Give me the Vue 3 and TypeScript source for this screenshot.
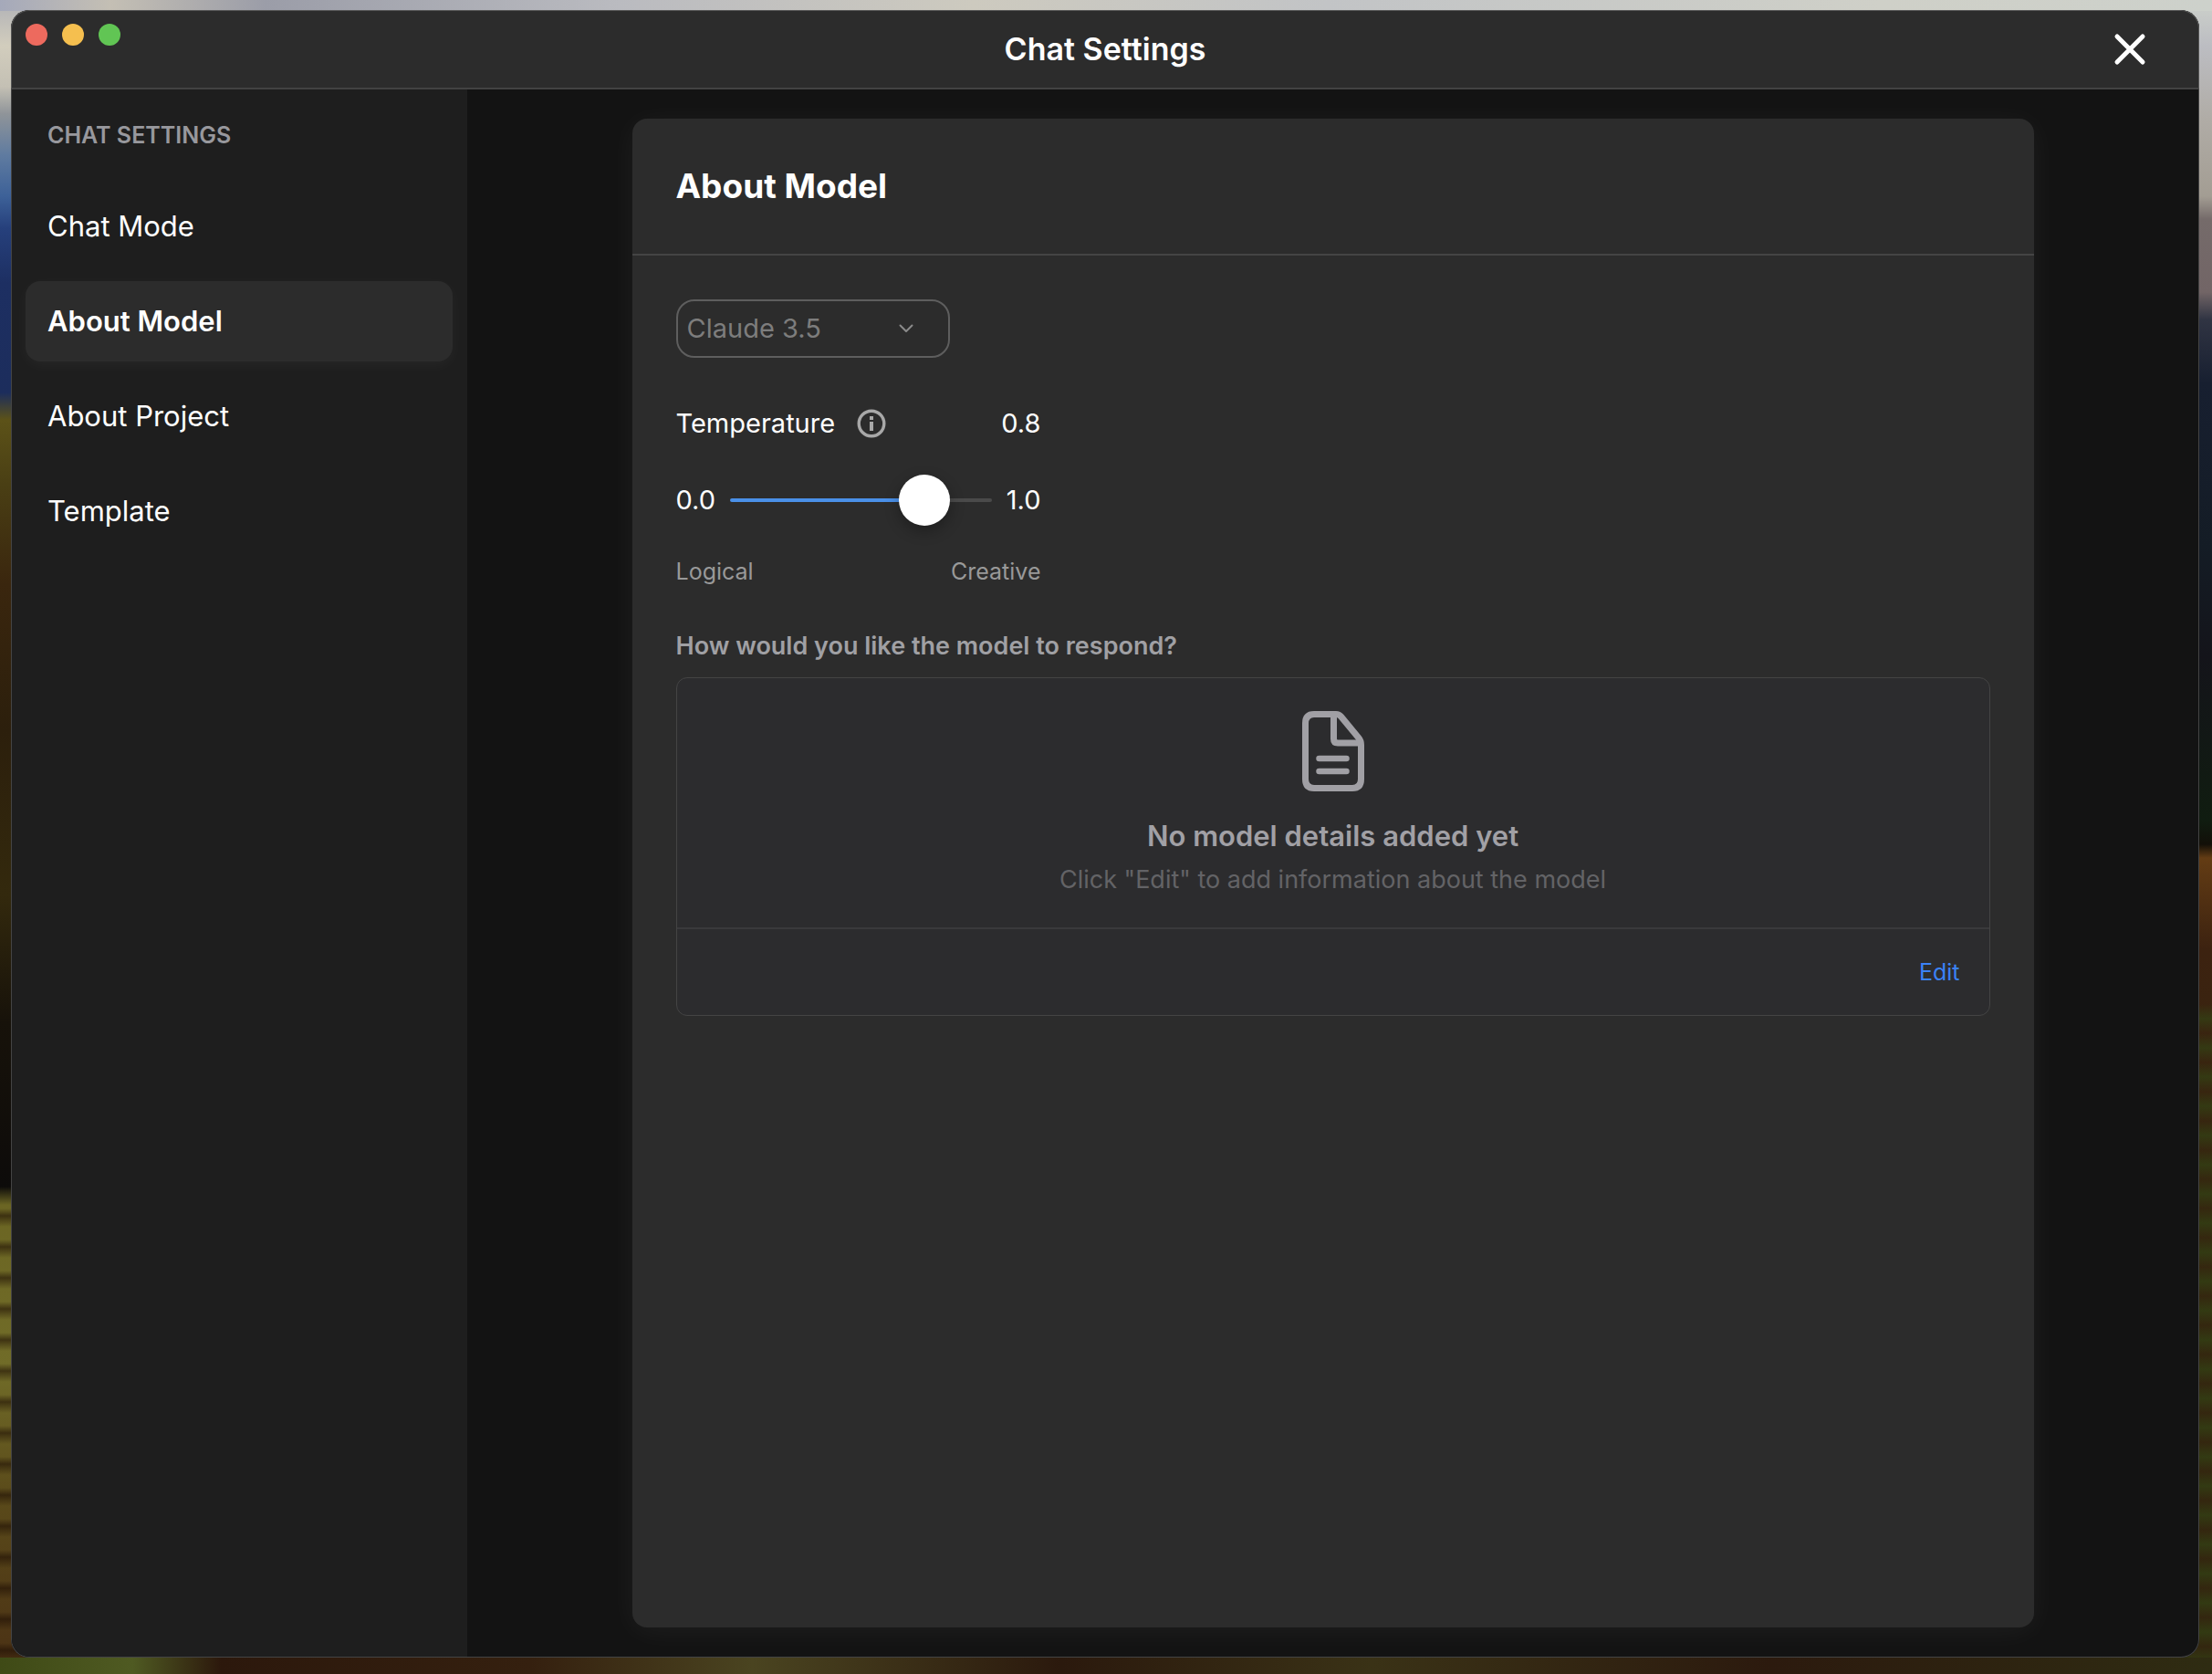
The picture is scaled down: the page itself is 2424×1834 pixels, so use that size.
<script setup lang="ts">
import { computed, ref } from 'vue'

const sections: string[] = ['Chat Mode', 'About Model', 'About Project', 'Template']
const active = ref('About Model')
const model = ref('Claude 3.5')
const temperature = ref(0.8)
const temperatureLabel = computed(() => Number(temperature.value).toFixed(1))
</script>

<template>
  <div class="desktop">
    <div class="window">
      <header class="titlebar">
        <div class="lights">
          <button class="light red" aria-label="Close window"></button>
          <button class="light yellow" aria-label="Minimize window"></button>
          <button class="light green" aria-label="Zoom window"></button>
        </div>
        <h1 class="title">Chat Settings</h1>
        <button class="close" aria-label="Close settings">
          <svg width="36" height="36" viewBox="0 0 36 36" aria-hidden="true">
            <path d="M4 4 32 32M32 4 4 32" fill="none" stroke="#fff" stroke-width="5" stroke-linecap="round" />
          </svg>
        </button>
      </header>

      <div class="layout">
        <nav class="sidebar" aria-label="Chat settings">
          <h2 class="sidebar-heading">CHAT SETTINGS</h2>
          <div class="sidebar-list">
            <button
              v-for="name in sections"
              :key="name"
              class="nav-item"
              :class="{ active: name === active }"
              @click="active = name"
            >{{ name }}</button>
          </div>
        </nav>

        <main class="content">
          <section class="card">
            <div class="card-header">
              <h2 class="card-title">About Model</h2>
            </div>
            <div class="card-body">
              <div class="select-wrap">
                <select v-model="model" class="select" aria-label="Model">
                  <option>Claude 3.5</option>
                </select>
                <svg class="chevron" width="16" height="10" viewBox="0 0 16 10" aria-hidden="true">
                  <path d="M1.500 1.500 8 8 14.500 1.500" fill="none" stroke="#8a8a8a" stroke-width="2" stroke-linecap="round" stroke-linejoin="round" />
                </svg>
              </div>

              <div class="temperature">
                <div class="temp-row">
                  <label for="temperature">Temperature</label>
                  <svg class="info" width="32" height="32" viewBox="0 0 32 32" aria-hidden="true">
                    <circle cx="16" cy="16" r="13.800" fill="none" stroke="#a8a8a8" stroke-width="3.400" />
                    <path d="M14 8h4v4h-4zM14 14h4v10h-4z" fill="#a8a8a8" />
                  </svg>
                  <output class="temp-value" for="temperature">{{ temperatureLabel }}</output>
                </div>
                <div class="slider-row">
                  <span>0.0</span>
                  <input
                    id="temperature"
                    v-model="temperature"
                    class="slider"
                    type="range"
                    min="0"
                    max="1"
                    step="0.1"
                    :style="{ '--fill': Number(temperature) * 100 + '%' }"
                  />
                  <span>1.0</span>
                </div>
                <div class="scale-row">
                  <span>Logical</span>
                  <span>Creative</span>
                </div>
              </div>

              <h3 class="question">How would you like the model to respond?</h3>
              <div class="details">
                <div class="empty">
                  <svg width="68" height="88" viewBox="0 0 68 88" fill="none" stroke="#a1a0a5" stroke-width="7" stroke-linecap="round" stroke-linejoin="round" aria-hidden="true">
                    <path d="M13 3.500H37Q40.500 3.500 42.500 6L61.500 29Q64.500 32.500 64.500 37V74.500Q64.500 84.500 55 84.500H13Q3.500 84.500 3.500 74.500V13.500Q3.500 3.500 13 3.500Z" />
                    <path d="M34.500 5V30.500Q34.500 35 39 35H63" />
                    <path d="M18.500 52H48.500M18.500 66H48.500" stroke-width="6.500" />
                  </svg>
                  <p class="empty-title">No model details added yet</p>
                  <p class="empty-hint">Click "Edit" to add information about the model</p>
                </div>
                <div class="details-footer">
                  <button class="edit">Edit</button>
                </div>
              </div>
            </div>
          </section>
        </main>
      </div>
    </div>
  </div>
</template>

<style>
body {
  margin: 0;
  background: #141414;
}
</style>

<style scoped>
.desktop {
  box-sizing: border-box;
  min-height: 100vh;
  display: flex;
  padding: 11px 14px 18px 12px;
  font-family: Inter, "Liberation Sans", sans-serif;
  color: #fff;
  /* sky on top, hills and vineyard rows down both sides and along the bottom */
  background:
    linear-gradient(90deg, #a5a9ba 0, #c4bfb4 5%, #9b9da8 12%, #babbc0 28%, #cdcabf 44%, #c2c4c6 60%, #cfd0c8 85%, #cdd1cb 100%) 0 0 / 100% 12px no-repeat,
    linear-gradient(90deg, #3f4a16 0, #4f5a22 6%, #2c180c 10%, #35200f 24%, #4a4420 34%, #2b190d 48%, #3a3216 62%, #2c1a0e 80%, #2f2c12 100%) 0 100% / 100% 18px no-repeat,
    repeating-linear-gradient(180deg, rgba(30, 14, 4, 0) 0, rgba(30, 14, 4, 0) 14px, rgba(30, 14, 4, 0.600) 22px, rgba(30, 14, 4, 0) 34px) 0 1310px / 40px 520px no-repeat,
    repeating-linear-gradient(180deg, rgba(50, 66, 20, 0) 0, rgba(50, 66, 20, 0.700) 16px, rgba(50, 66, 20, 0) 32px) 100% 1100px / 40px 730px no-repeat,
    linear-gradient(180deg, #b0b1b6 0, #d2cdbd 50px, #c4c0b4 95px, #8f9499 125px, #5f7ba0 170px, #3d6198 215px, #26407c 250px, #1d2f62 310px, #1c2d5c 430px, #5c5218 460px, #4a3f14 530px, #3a260e 640px, #2c1f0c 800px, #33290d 980px, #17120a 1120px, #0d0b0a 1300px, #6b6523 1320px, #716c28 1500px, #5a4a1a 1640px, #4a3014 100%) 0 0 / 40px 100% no-repeat,
    linear-gradient(180deg, #cdd1cb 0, #bcbdc2 50px, #b0aca6 130px, #a39d93 215px, #756b6a 240px, #726566 320px, #303443 350px, #171f30 420px, #141c25 600px, #14141a 720px, #101c10 900px, #120f08 925px, #633c14 940px, #3c2210 1040px, #35270f 1300px, #33260f 100%) 100% 0 / 40px 100% no-repeat;
}

.window {
  flex: 1;
  display: flex;
  flex-direction: column;
  box-sizing: border-box;
  overflow: hidden;
  border-radius: 20px;
  background: #131313;
  box-shadow: inset 0 0 0 1px #444;
}

button {
  border: 0;
  padding: 0;
  margin: 0;
  background: none;
  color: inherit;
  font: inherit;
  cursor: pointer;
}

h1,
h2,
h3,
p {
  margin: 0;
}

.titlebar {
  display: grid;
  grid-template-columns: 1fr auto 1fr;
  box-sizing: border-box;
  height: 87px;
  border: 1px solid #565656;
  border-bottom: 2px solid #424242;
  border-radius: 20px 20px 0 0;
  background: #2c2c2c;
}

.lights {
  display: flex;
  gap: 16px;
  padding: 14px 0 0 15px;
}

.light {
  width: 24px;
  height: 24px;
  border-radius: 50%;
}

.red {
  background: #ed6a5e;
}

.yellow {
  background: #f5bf4f;
}

.green {
  background: #61c554;
}

.title {
  align-self: center;
  font-size: 34px;
  line-height: 40px;
  font-weight: 600;
}

.close {
  justify-self: end;
  align-self: center;
  display: flex;
  margin-right: 57px;
}

.layout {
  flex: 1;
  display: flex;
  margin: 0 1px 1px;
}

.sidebar {
  flex: none;
  box-sizing: border-box;
  width: 499px;
  padding: 36px 16px 32px 15px;
  border-bottom-left-radius: 20px;
  background: #1e1e1e;
}

.sidebar-heading {
  margin-bottom: 42px;
  padding: 0 24px;
  color: #98989d;
  font-size: 25px;
  line-height: 28px;
  font-weight: 600;
}

.sidebar-list {
  display: flex;
  flex-direction: column;
  gap: 16px;
}

.nav-item {
  height: 88px;
  padding: 0 24px;
  border-radius: 16px;
  text-align: left;
  font-size: 31px;
  line-height: 40px;
}

.nav-item.active {
  background: #2c2c2c;
  box-shadow: 0 4px 16px rgba(255, 255, 255, 0.040);
  font-weight: 600;
}

.content {
  flex: 1;
  display: flex;
  justify-content: center;
  padding: 32px;
}

.card {
  flex: 1;
  max-width: 1536px;
  border-radius: 16px;
  background: #2c2c2c;
  box-shadow: 0 4px 32px rgba(255, 255, 255, 0.050);
}

.card-header {
  padding: 48px;
  border-bottom: 2px solid #444;
}

.card-title {
  font-size: 37px;
  line-height: 52px;
  font-weight: 700;
}

.card-body {
  padding: 48px;
}

.select-wrap {
  display: grid;
  align-items: center;
  width: 300px;
  margin-bottom: 56px;
}

.select {
  grid-area: 1 / 1;
  appearance: none;
  box-sizing: border-box;
  width: 100%;
  height: 64px;
  margin: 0;
  padding: 0 48px 0 10px;
  border: 2px solid #5e5e5e;
  border-radius: 20px;
  background: transparent;
  color: #7d7d7d;
  font-family: inherit;
  font-size: 29px;
  line-height: 40px;
}

.chevron {
  grid-area: 1 / 1;
  justify-self: end;
  margin-right: 40px;
  pointer-events: none;
}

.temperature {
  width: 400px;
  margin-bottom: 52px;
  font-size: 29px;
  line-height: 32px;
}

.temp-row {
  display: flex;
  align-items: center;
  gap: 24px;
  margin-bottom: 40px;
}

.temp-value {
  margin-left: auto;
}

.slider-row {
  display: flex;
  align-items: center;
  gap: 16px;
  height: 56px;
  margin-bottom: 36px;
}

.slider {
  flex: 1;
  min-width: 0;
  appearance: none;
  height: 56px;
  margin: 0;
  background: transparent;
}

.slider::-webkit-slider-runnable-track {
  height: 4px;
  border-radius: 2px;
  background: linear-gradient(90deg, #4a90e8 var(--fill), #4a4a4a var(--fill));
}

.slider::-webkit-slider-thumb {
  appearance: none;
  width: 56px;
  height: 56px;
  margin-top: -26px;
  border-radius: 50%;
  background: #fff;
  box-shadow: 0 6px 16px rgba(0, 0, 0, 0.300);
}

.scale-row {
  display: flex;
  justify-content: space-between;
  color: #999;
  font-size: 25px;
  line-height: 28px;
}

.question {
  margin-bottom: 18px;
  color: #a0a0a4;
  font-size: 27px;
  line-height: 32px;
  font-weight: 600;
}

.details {
  border: 1px solid #444;
  border-radius: 12px;
  background: #2c2c2e;
}

.empty {
  display: flex;
  flex-direction: column;
  align-items: center;
  padding: 36px 32px;
  border-bottom: 2px solid #3a3a3c;
}

.empty-title {
  margin: 31px 0 14px;
  color: #a1a0a5;
  font-size: 31px;
  line-height: 36px;
  font-weight: 600;
}

.empty-hint {
  color: #636366;
  font-size: 27px;
  line-height: 32px;
}

.details-footer {
  display: flex;
  justify-content: flex-end;
  padding: 31px 32px;
}

.edit {
  color: #3b82f6;
  font-size: 25px;
  line-height: 32px;
}
</style>
